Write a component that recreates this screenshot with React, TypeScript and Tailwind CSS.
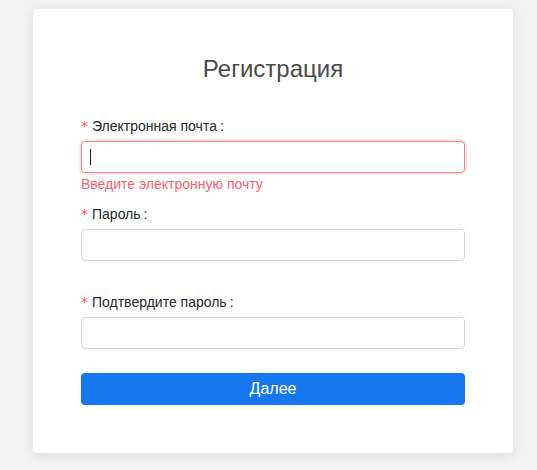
import React from "react";

function Label({ text }: { text: string }) {
  return (
    <div className="h-[22px] leading-[22px] text-[14px] text-[#262626] mb-1 flex items-center">
      <span className="text-[#ff4d4f] mr-1 text-[14px]" style={{ fontFamily: "SimSun, 'DejaVu Sans', sans-serif" }}>*</span>
      <span>{text}</span>
      <span className="ml-[3px] mr-[8px]">:</span>
    </div>
  );
}

export default function App() {
  return (
    <div
      className="w-[537px] h-[470px] bg-[#f3f3f3] pt-[9px] pl-[33px]"
      style={{ fontFamily: "'Liberation Sans', Arial, sans-serif" }}
    >
      <div className="w-[480px] h-[444px] bg-white rounded-[4px] shadow-[0_2px_12px_rgba(0,0,0,0.1)] px-12 pt-[44px]">
        <div className="text-center text-[24px] leading-[32px] text-[#4a4a4a]">Регистрация</div>

        <div className="mt-[30px]">
          <Label text="Электронная почта" />
          <div className="h-[32px] rounded-[4px] border border-[#ff7c85] shadow-[0_0_0_2px_rgba(255,77,79,0.12)] flex items-center px-[8px]">
            <div className="w-[1px] h-[16px] bg-[#222]" />
          </div>
          <div className="text-[14px] leading-[22px] text-[#ff5c6c]">Введите электронную почту</div>
        </div>

        <div className="mt-[8px]">
          <Label text="Пароль" />
          <div className="h-[32px] rounded-[4px] border border-[#d9d9d9]" />
        </div>

        <div className="mt-[30px]">
          <Label text="Подтвердите пароль" />
          <div className="h-[32px] rounded-[4px] border border-[#d9d9d9]" />
        </div>

        <button className="mt-[24px] w-full h-[32px] rounded-[4px] bg-[#1677ee] text-white text-[16px] leading-[32px]">
          Далее
        </button>
      </div>
    </div>
  );
}
